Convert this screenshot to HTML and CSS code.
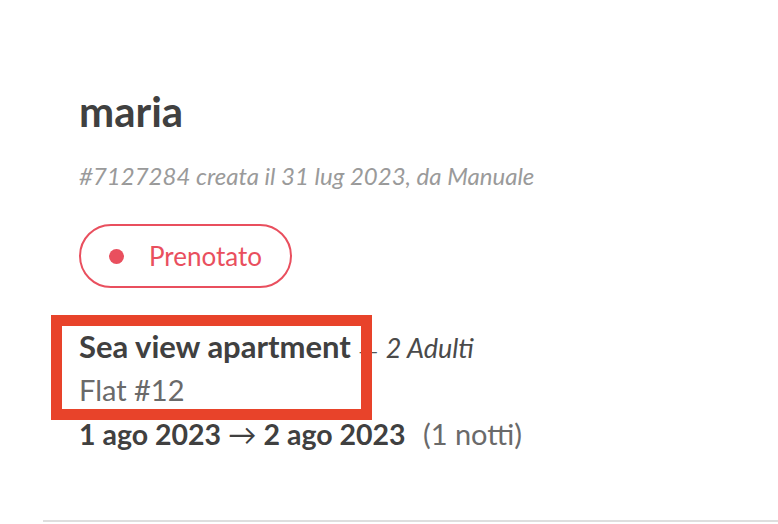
FILE: index.html
```html
<!DOCTYPE html>
<html lang="it">
<head>
    <meta charset="UTF-8">
    <meta name="viewport" content="width=device-width, initial-scale=1.0">
    <title>Prenotazione</title>
    <link rel="stylesheet" href="styles.css">
</head>
<body>

    <div class="booking">
        <h1 class="guest">maria</h1>
        <p class="meta">#7127284 creata il 31 lug 2023, da Manuale</p>

        <div class="status">
            <span class="status-dot"></span>
            <span>Prenotato</span>
        </div>

        <div class="stay">
            <!-- annotation box over the unit info -->
            <div class="highlight"></div>
            <div class="unit">
                <strong>Sea view apartment</strong>
                <span class="sep">—</span>
                <em class="guests">2 Adulti</em>
            </div>
            <div class="flat">Flat #12</div>
            <div class="dates">
                <strong>1 ago 2023 <span class="arrow">→</span> 2 ago 2023</strong>
                <span class="nights">(1 notti)</span>
            </div>
        </div>
    </div>

</body>
</html>
```

FILE: styles.css
```css
body {
    font-family: "Lato", "Noto Sans", sans-serif;
    margin: 0;
    background-color: #ffffff;
    color: #404040;
}

.booking {
    margin-left: 43px;
    padding: 86px 0 63px 36px;
    border-bottom: 2px solid #dedede;
}

.guest {
    margin: 0;
    font-size: 42px;
    line-height: 50px;
    font-weight: bold;
    color: #404040;
}

.meta {
    margin: 25px 0 0;
    font-size: 24px;
    line-height: 30px;
    font-style: italic;
    color: #9a9a9a;
}

.status {
    display: inline-flex;
    align-items: center;
    gap: 25px;
    margin-top: 33px;
    height: 64px;
    box-sizing: border-box;
    padding: 0 28px 0 28px;
    border: 2px solid #e94f5e;
    border-radius: 32px;
    color: #e94f5e;
    font-size: 26px;
}

.status-dot {
    width: 15px;
    height: 15px;
    border-radius: 50%;
    background: #e94f5e;
}

.stay {
    position: relative;
    margin-top: 36px;
}

.unit {
    font-size: 31px;
    line-height: 44px;
}

.sep {
    font-family: "DejaVu Sans", sans-serif;
    font-size: 19px;
    line-height: 1;
    color: #555555;
}

.guests {
    font-size: 27px;
    line-height: 1;
    color: #4a4a4a;
}

.flat {
    font-size: 29px;
    line-height: 44px;
    color: #6a6a6a;
}

.dates {
    font-size: 28.5px;
    line-height: 45px;
}

.arrow {
    font-weight: normal;
}

.nights {
    margin-left: 10px;
    font-size: 29px;
    line-height: 1;
    color: #6a6a6a;
}

.highlight {
    position: absolute;
    top: -9px;
    left: -28px;
    width: 321px;
    height: 105px;
    box-sizing: border-box;
    border: 11px solid #e8432a;
}
```
